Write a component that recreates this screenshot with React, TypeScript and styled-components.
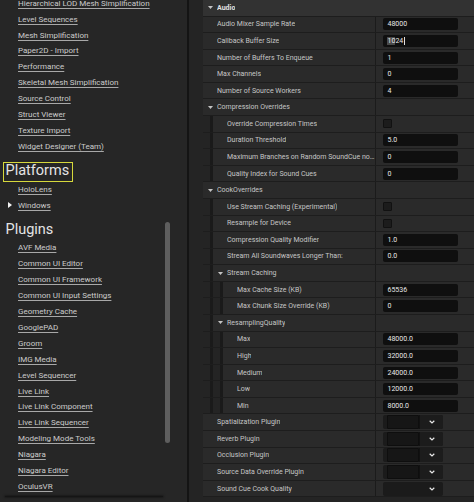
import React from 'react';
import styled, { createGlobalStyle } from 'styled-components';

const Global = createGlobalStyle`
  html, body { margin: 0; padding: 0; background: #242424; }
  body { width: 474px; height: 502px; overflow: hidden; font-family: Roboto, "Liberation Sans", sans-serif; }
`;

const Layout = styled.div`
  display: flex;
  width: 474px;
  height: 502px;
  overflow: hidden;
`;

/* ---------- Left navigation ---------- */
const NavPanel = styled.div`
  position: relative;
  width: 187px;
  flex: none;
  background: #262626;
  overflow: hidden;
`;

const NavScroll = styled.div`
  margin-top: -4.65px;
`;

const NavItem = styled.div`
  height: 15.9px;
  display: flex;
  align-items: center;
  padding-left: 8px;
  font-size: 8px;
  color: #cccccc;
  white-space: nowrap;
`;

const NavArrowSlot = styled.span`
  width: 10px;
  flex: none;
  display: flex;
  align-items: center;
`;

const NavLink = styled.span`
  text-decoration: underline;
  text-underline-offset: 1.5px;
  text-decoration-color: #a8a8a8;
`;

const SectionHeading = styled.div`
  height: 27px;
  box-sizing: border-box;
  padding: 6px 0 0 3px;
`;

const HeadingText = styled.span<{ $active?: boolean }>`
  display: inline-flex;
  align-items: center;
  height: 20px;
  box-sizing: border-box;
  padding: 0 2.5px 0 1.5px;
  border: 1.5px solid ${(p) => (p.$active ? '#d6d83c' : 'transparent')};
  font-size: 14.5px;
  color: #e4e4e4;
  line-height: 1;
`;

const NavScrollbar = styled.div`
  position: absolute;
  left: 165px;
  top: 222px;
  width: 5px;
  height: 221px;
  border-radius: 3px;
  background: #5e5e5e;
`;

const NavBottomShadow = styled.div`
  position: absolute;
  left: 5px;
  top: 495.5px;
  width: 158px;
  height: 1.5px;
  background: #151515;
  box-shadow: 0 0 2px 0.5px rgba(0, 0, 0, 0.5);
`;

const Splitter = styled.div`
  width: 2px;
  flex: none;
  background: #141414;
`;

/* ---------- Details panel ---------- */
const DetailsPanel = styled.div`
  flex: 1;
  min-width: 0;
  background: #242424;
  padding-left: 14px;
  overflow: hidden;
`;

type Kind = 'category' | 'group' | 'prop';

const Row = styled.div<{ $kind: Kind }>`
  display: flex;
  height: 16.59px;
  box-sizing: border-box;
  border-bottom: 1px solid #1d1d1d;
  background: ${(p) => (p.$kind === 'category' ? '#323232' : '#2a2a2a')};
`;

const Well = styled.div`
  width: 10px;
  flex: none;
  box-sizing: border-box;
  background: #242424;
  border-right: 3px solid #1a1a1a;
`;

const NameCell = styled.div<{ $kind: Kind }>`
  flex: 1;
  min-width: 0;
  display: flex;
  align-items: center;
  font-size: 7px;
  color: ${(p) => (p.$kind === 'category' ? '#e2e2e2' : '#c6c6c6')};
  font-weight: ${(p) => (p.$kind === 'category' ? 700 : 400)};
  white-space: nowrap;
  overflow: hidden;
`;

const CaretSlot = styled.span`
  width: 14px;
  flex: none;
  display: flex;
  align-items: center;
  justify-content: center;
`;

const Label = styled.span`
  overflow: hidden;
  text-overflow: ellipsis;
`;

const ValueCell = styled.div`
  width: 99px;
  flex: none;
  box-sizing: border-box;
  border-left: 1px solid #1b1b1b;
  display: flex;
  align-items: center;
  padding-left: 7px;
`;

const NumberBox = styled.div`
  width: 75px;
  height: 12px;
  box-sizing: border-box;
  background: #0f0f0f;
  border-radius: 2px;
  display: flex;
  align-items: center;
  padding-left: 4.5px;
  font-size: 7px;
  color: #e8e8e8;
`;

const Selection = styled.span`
  background: #4a4a4a;
  margin-left: -1px;
  padding-left: 1px;
`;

const Cursor = styled.span`
  width: 0.8px;
  height: 8px;
  background: #e0e0e0;
  margin-left: 0.5px;
`;

const CheckBox = styled.div`
  width: 9px;
  height: 9px;
  box-sizing: border-box;
  background: #1c1c1c;
  border: 1px solid #111111;
  border-radius: 1px;
`;

const AssetCombo = styled.div`
  width: 60px;
  height: 14px;
  box-sizing: border-box;
  display: flex;
  background: #1b1b1b;
  border-radius: 2px;
  padding-left: 4px;
  overflow: hidden;
`;

const AssetSlot = styled.div`
  width: 32px;
  flex: none;
  box-sizing: border-box;
  background: #161616;
  border: 1px solid #0e0e0e;
  border-radius: 1px;
`;

const ComboButton = styled.div`
  flex: 1;
  display: flex;
  align-items: center;
  justify-content: center;
  background: #1c1c1c;
  border-left: 1px solid #111111;
`;

const EnumCombo = styled.div`
  width: 60px;
  height: 14px;
  box-sizing: border-box;
  background: #1b1b1b;
  border-radius: 2px;
  display: flex;
  align-items: center;
  justify-content: flex-end;
  padding-right: 8.5px;
`;

const DownCaret = () => (
  <svg width="5" height="3" viewBox="0 0 5 3">
    <polygon points="0,0 5,0 2.5,3" fill="#c4c4c4" />
  </svg>
);

const RightCaret = () => (
  <svg width="4" height="6" viewBox="0 0 4 6">
    <polygon points="0,0 4,3 0,6" fill="#f2f2f2" />
  </svg>
);

const Chevron = () => (
  <svg width="6" height="4" viewBox="0 0 6 4">
    <polyline points="0.7,0.8 3,3 5.3,0.8" fill="none" stroke="#e8e8e8" strokeWidth="1.2" />
  </svg>
);

type Value =
  | { t: 'num'; v: string }
  | { t: 'sel'; sel: string; rest: string }
  | { t: 'check' }
  | { t: 'asset' }
  | { t: 'enum' };

type RowDef = { label: string; level: number; kind: Kind; value?: Value };

const num = (v: string): Value => ({ t: 'num', v });

const rows: RowDef[] = [
  { label: 'Audio', level: 0, kind: 'category' },
  { label: 'Audio Mixer Sample Rate', level: 1, kind: 'prop', value: num('48000') },
  { label: 'Callback Buffer Size', level: 1, kind: 'prop', value: { t: 'sel', sel: '10', rest: '24' } },
  { label: 'Number of Buffers To Enqueue', level: 1, kind: 'prop', value: num('1') },
  { label: 'Max Channels', level: 1, kind: 'prop', value: num('0') },
  { label: 'Number of Source Workers', level: 1, kind: 'prop', value: num('4') },
  { label: 'Compression Overrides', level: 1, kind: 'group' },
  { label: 'Override Compression Times', level: 2, kind: 'prop', value: { t: 'check' } },
  { label: 'Duration Threshold', level: 2, kind: 'prop', value: num('5.0') },
  { label: 'Maximum Branches on Random SoundCue no...', level: 2, kind: 'prop', value: num('0') },
  { label: 'Quality Index for Sound Cues', level: 2, kind: 'prop', value: num('0') },
  { label: 'CookOverrides', level: 1, kind: 'group' },
  { label: 'Use Stream Caching (Experimental)', level: 2, kind: 'prop', value: { t: 'check' } },
  { label: 'Resample for Device', level: 2, kind: 'prop', value: { t: 'check' } },
  { label: 'Compression Quality Modifier', level: 2, kind: 'prop', value: num('1.0') },
  { label: 'Stream All Soundwaves Longer Than:', level: 2, kind: 'prop', value: num('0.0') },
  { label: 'Stream Caching', level: 2, kind: 'group' },
  { label: 'Max Cache Size (KB)', level: 3, kind: 'prop', value: num('65536') },
  { label: 'Max Chunk Size Override (KB)', level: 3, kind: 'prop', value: num('0') },
  { label: 'ResamplingQuality', level: 2, kind: 'group' },
  { label: 'Max', level: 3, kind: 'prop', value: num('48000.0') },
  { label: 'High', level: 3, kind: 'prop', value: num('32000.0') },
  { label: 'Medium', level: 3, kind: 'prop', value: num('24000.0') },
  { label: 'Low', level: 3, kind: 'prop', value: num('12000.0') },
  { label: 'Min', level: 3, kind: 'prop', value: num('8000.0') },
  { label: 'Spatialization Plugin', level: 1, kind: 'prop', value: { t: 'asset' } },
  { label: 'Reverb Plugin', level: 1, kind: 'prop', value: { t: 'asset' } },
  { label: 'Occlusion Plugin', level: 1, kind: 'prop', value: { t: 'asset' } },
  { label: 'Source Data Override Plugin', level: 1, kind: 'prop', value: { t: 'asset' } },
  { label: 'Sound Cue Cook Quality', level: 1, kind: 'prop', value: { t: 'enum' } },
];

const renderValue = (v?: Value) => {
  if (!v) return null;
  switch (v.t) {
    case 'num':
      return <NumberBox>{v.v}</NumberBox>;
    case 'sel':
      return (
        <NumberBox>
          <Selection>{v.sel}</Selection>
          {v.rest}
          <Cursor />
        </NumberBox>
      );
    case 'check':
      return <CheckBox />;
    case 'asset':
      return (
        <AssetCombo>
          <AssetSlot />
          <ComboButton>
            <Chevron />
          </ComboButton>
        </AssetCombo>
      );
    case 'enum':
      return (
        <EnumCombo>
          <Chevron />
        </EnumCombo>
      );
  }
};

type NavEntry =
  | { t: 'item'; label: string; arrow?: boolean }
  | { t: 'heading'; label: string; active?: boolean };

const nav: NavEntry[] = [
  { t: 'item', label: 'Hierarchical LOD Mesh Simplification' },
  { t: 'item', label: 'Level Sequences' },
  { t: 'item', label: 'Mesh Simplification' },
  { t: 'item', label: 'Paper2D - Import' },
  { t: 'item', label: 'Performance' },
  { t: 'item', label: 'Skeletal Mesh Simplification' },
  { t: 'item', label: 'Source Control' },
  { t: 'item', label: 'Struct Viewer' },
  { t: 'item', label: 'Texture Import' },
  { t: 'item', label: 'Widget Designer (Team)' },
  { t: 'heading', label: 'Platforms', active: true },
  { t: 'item', label: 'HoloLens' },
  { t: 'item', label: 'Windows', arrow: true },
  { t: 'heading', label: 'Plugins' },
  { t: 'item', label: 'AVF Media' },
  { t: 'item', label: 'Common UI Editor' },
  { t: 'item', label: 'Common UI Framework' },
  { t: 'item', label: 'Common UI Input Settings' },
  { t: 'item', label: 'Geometry Cache' },
  { t: 'item', label: 'GooglePAD' },
  { t: 'item', label: 'Groom' },
  { t: 'item', label: 'IMG Media' },
  { t: 'item', label: 'Level Sequencer' },
  { t: 'item', label: 'Live Link' },
  { t: 'item', label: 'Live Link Component' },
  { t: 'item', label: 'Live Link Sequencer' },
  { t: 'item', label: 'Modeling Mode Tools' },
  { t: 'item', label: 'Niagara' },
  { t: 'item', label: 'Niagara Editor' },
  { t: 'item', label: 'OculusVR' },
];

export default function App() {
  return (
    <>
      <Global />
      <Layout>
        <NavPanel>
          <NavScroll>
            {nav.map((n, i) =>
              n.t === 'heading' ? (
                <SectionHeading key={i}>
                  <HeadingText $active={n.active}>{n.label}</HeadingText>
                </SectionHeading>
              ) : (
                <NavItem key={i}>
                  <NavArrowSlot>{n.arrow && <RightCaret />}</NavArrowSlot>
                  <NavLink>{n.label}</NavLink>
                </NavItem>
              )
            )}
          </NavScroll>
          <NavScrollbar />
          <NavBottomShadow />
        </NavPanel>
        <Splitter />
        <DetailsPanel>
          {rows.map((r, i) => (
            <Row key={i} $kind={r.kind}>
              {Array.from({ length: Math.max(0, r.level - 1) }).map((_, w) => (
                <Well key={w} />
              ))}
              <NameCell $kind={r.kind}>
                <CaretSlot>{r.kind !== 'prop' && <DownCaret />}</CaretSlot>
                <Label>{r.label}</Label>
              </NameCell>
              {r.kind !== 'category' && <ValueCell>{renderValue(r.value)}</ValueCell>}
            </Row>
          ))}
        </DetailsPanel>
      </Layout>
    </>
  );
}
